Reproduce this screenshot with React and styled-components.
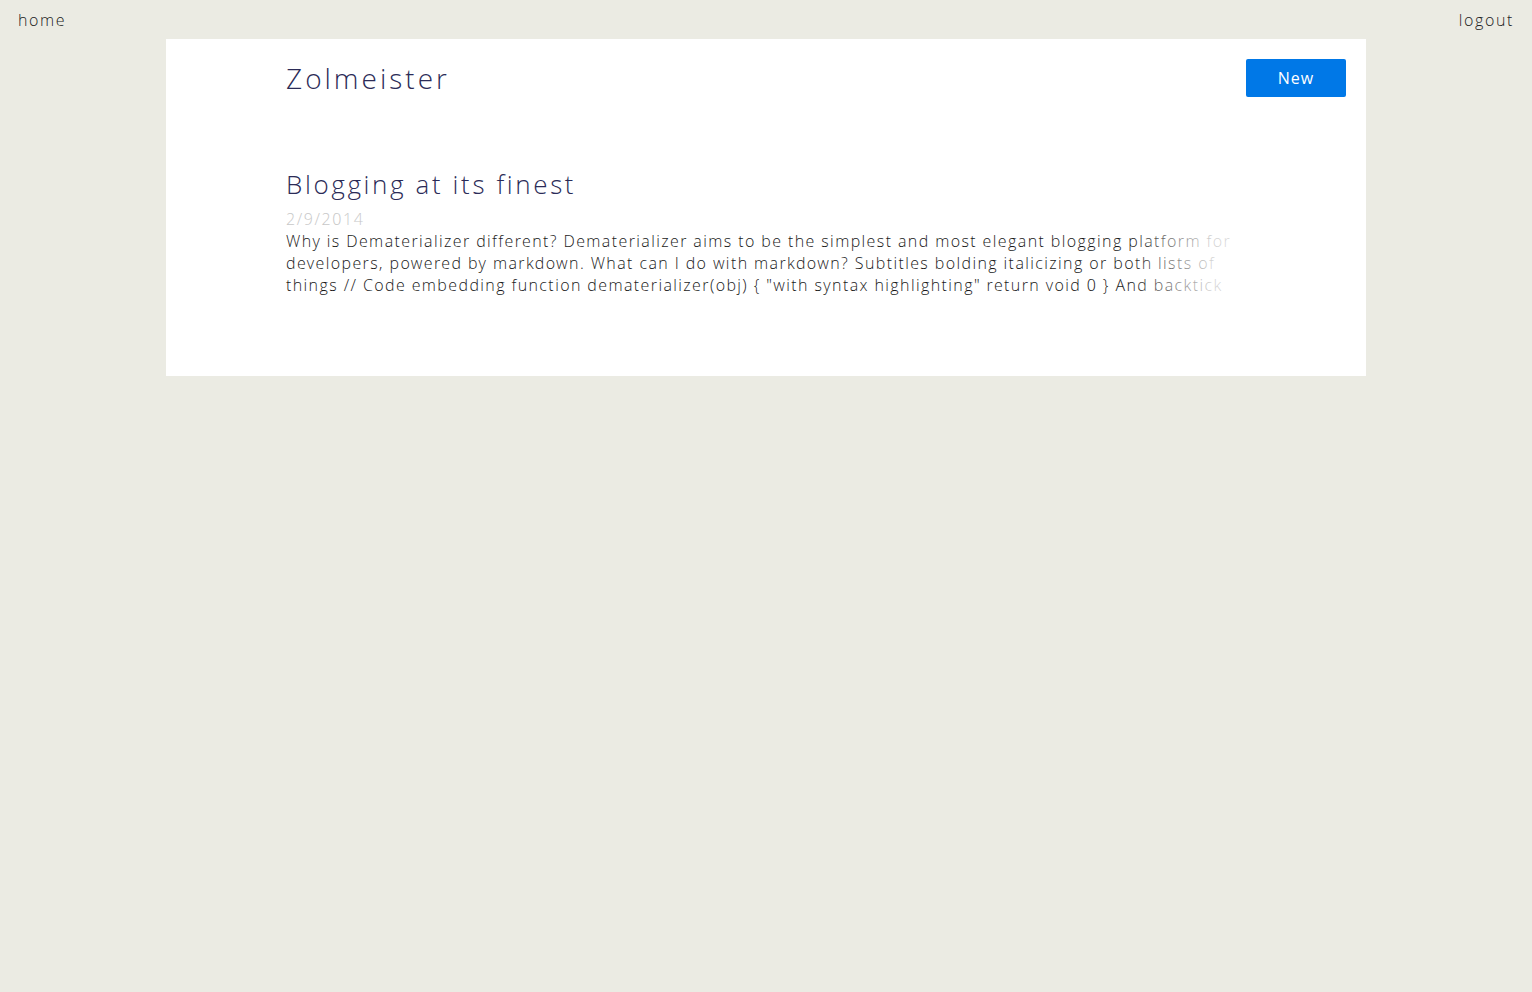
import React from "react";
import styled, { createGlobalStyle } from "styled-components";

const GlobalStyle = createGlobalStyle`
    body {
        margin: 0;
        background-color: #ebebe3;
        font-family: "Open Sans Light", "Open Sans", "Liberation Sans", sans-serif;
        font-weight: 300;
        color: #222;
        letter-spacing: 0.1em;
    }
`

const TopBar = styled.div`
    height: 39px;
    display: flex;
    justify-content: space-between;
    align-items: center;
    padding: 0 18px 0 18px;
    font-size: 16px;
`

const NavLink = styled.a`
    color: #222;
    text-decoration: none;
    cursor: pointer;
`

const Card = styled.div`
    width: 1200px;
    margin: 0 auto;
    background-color: #fff;
    padding: 20px 20px 80px 120px;
    box-sizing: border-box;
`

const Header = styled.div`
    display: flex;
    justify-content: space-between;
    align-items: center;
`

const SiteTitle = styled.h1`
    margin: 0;
    font-size: 28px;
    font-weight: 300;
    line-height: 38px;
    letter-spacing: 3px;
    color: #2b2b57;
`

const Button = styled.button`
    width: 100px;
    height: 38px;
    border: 0;
    border-radius: 2px;
    background-color: #0078e7;
    color: #fff;
    font-family: "Open Sans", "Liberation Sans", sans-serif;
    font-weight: 400;
    font-size: 16px;
    letter-spacing: 1px;
    cursor: pointer;
`

const Post = styled.div`
    width: 960px;
    margin-top: 67px;
`

const PostTitle = styled.h2`
    margin: 0 0 4px;
    font-size: 26px;
    font-weight: 300;
    line-height: 40px;
    letter-spacing: 0.1em;
    color: #2b2b57;
`

const PostDate = styled.div`
    font-size: 16px;
    line-height: 22px;
    color: #c8c8c8;
`

const Excerpt = styled.div`
    position: relative;
    font-size: 16px;
    line-height: 22px;
    letter-spacing: 1.4px;
    color: #1a1a1a;
`

const Fade = styled.div`
    position: absolute;
    top: 0;
    right: 0;
    bottom: 0;
    width: 115px;
    background: linear-gradient(to right, rgba(255,255,255,0), rgba(255,255,255,0.8) 70%, rgba(255,255,255,0.85));
`

const App = () => {
    return (
        <>
            <GlobalStyle />
            <TopBar>
                <NavLink>home</NavLink>
                <NavLink>logout</NavLink>
            </TopBar>
            <Card>
                <Header>
                    <SiteTitle>Zolmeister</SiteTitle>
                    <Button>New</Button>
                </Header>
                <Post>
                    <PostTitle>Blogging at its finest</PostTitle>
                    <PostDate>2/9/2014</PostDate>
                    <Excerpt>
                        Why is Dematerializer different? Dematerializer aims to be the simplest and most elegant blogging platform for developers, powered by markdown. What can I do with markdown? Subtitles bolding italicizing or both lists of things // Code embedding function dematerializer(obj) {"{"} "with syntax highlighting" return void 0 {"}"} And backtick
                        <Fade />
                    </Excerpt>
                </Post>
            </Card>
        </>
    )
};

export default App;
